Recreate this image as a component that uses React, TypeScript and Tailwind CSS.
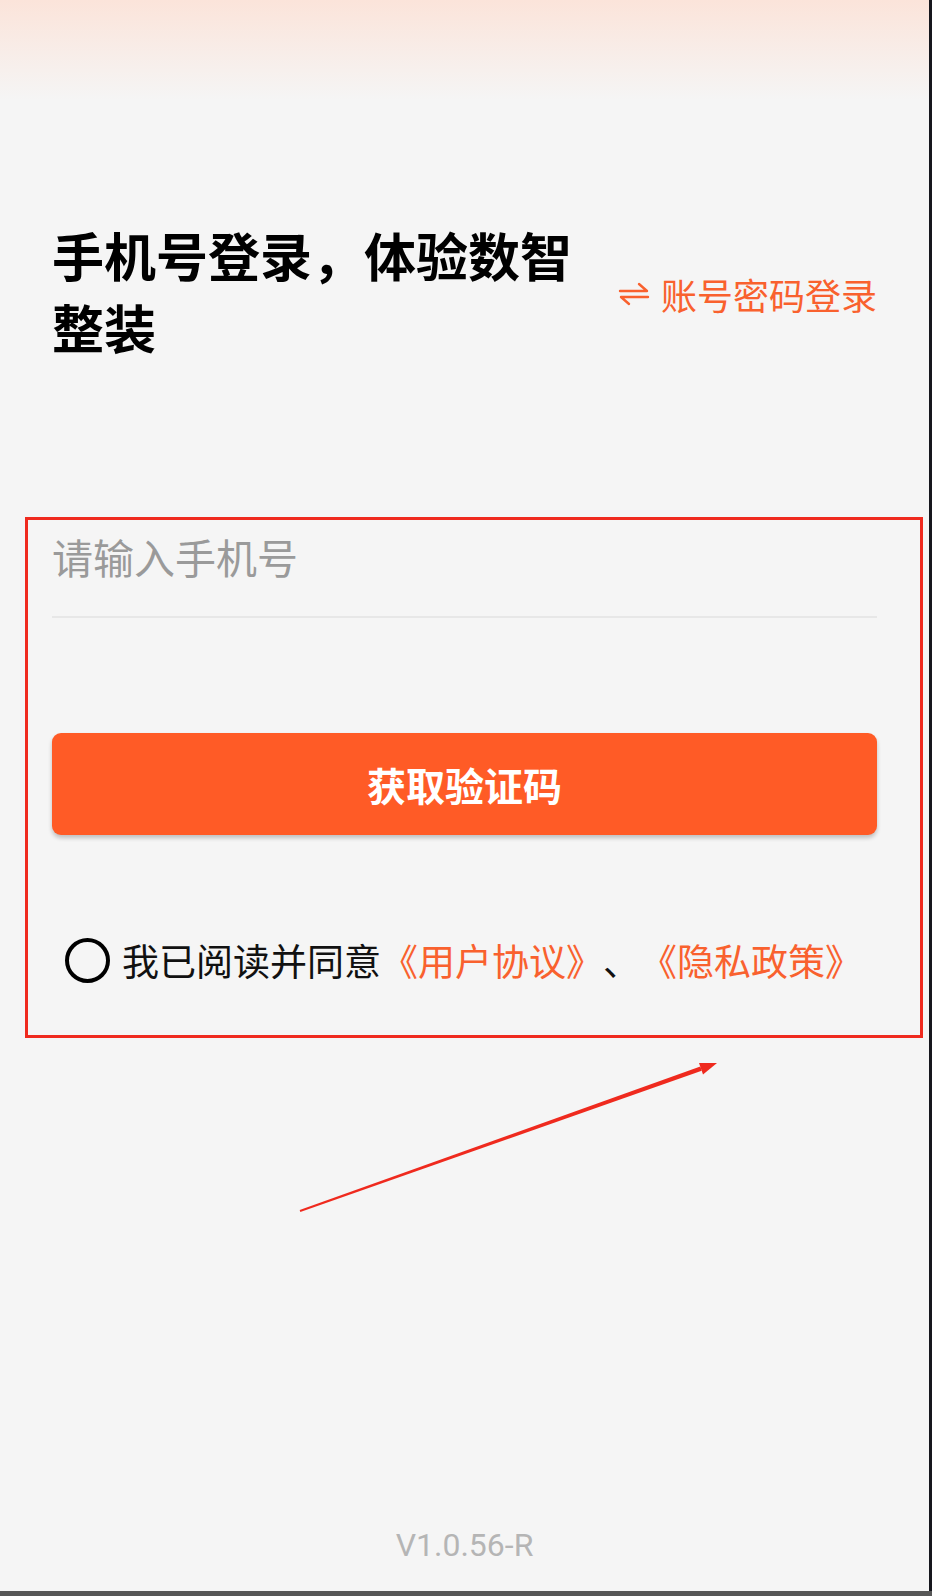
import React from "react";

const cjk = { fontFamily: '"Noto Sans CJK SC", "Noto Sans", sans-serif' };

function SwapIcon() {
  return (
    <svg width="32" height="24" viewBox="0 0 32 24" fill="none" stroke="#f9612e" strokeWidth="2.4" strokeLinecap="round" strokeLinejoin="round">
      <path d="M2 9 H29 L21 2" />
      <path d="M30 15 H3 L11 22" />
    </svg>
  );
}

export default function App() {
  return (
    <div className="w-[932px] h-[1596px] flex flex-col overflow-hidden [text-spacing-trim:space-all]" style={cjk}>
      <div className="flex flex-row flex-1 min-h-0">
        <main className="flex-1 flex flex-col bg-[#f5f5f5]">
          <div className="h-[100px] bg-linear-to-b from-[#fbe4da] to-[#f5f5f5]" />
          <div className="mt-[119px] pl-[52px] pr-[52px] flex flex-row items-center justify-between">
            <h1 className="w-[540px] text-[52px] leading-[72px] font-bold text-black">
              手机号登录，体验数智整装
            </h1>
            <button className="flex items-center gap-[11px] mt-[6px] text-[36px] text-[#f9612e]">
              <SwapIcon />
              <span>账号密码登录</span>
            </button>
          </div>

          <section className="mt-[154px] ml-[25px] mr-[6px] border-[3px] border-[#ef2a1e] pl-[24px] pr-[43px] pt-0 pb-[52px]">
            <div className="h-[98px] pt-[8px] border-b-2 border-[#e7e7e7]">
              <input
                className="w-full h-[58px] bg-transparent outline-none text-[41px] text-[#333] placeholder:text-[#9a9a9a]"
                placeholder="请输入手机号"
                style={cjk}
              />
            </div>
            <button className="mt-[115px] w-full h-[102px] rounded-[9px] bg-[#ff5b26] shadow-[0_3px_4px_rgba(0,0,0,0.22)] flex items-center justify-center text-white text-[39px] font-bold">
              获取验证码
            </button>
            <div className="mt-[103px] h-[45px] pl-[13px] flex flex-row items-center">
              <span className="w-[45px] h-[45px] rounded-full border-[4px] border-black shrink-0" />
              <p className="ml-[12px] text-[37px] text-[#111] whitespace-nowrap [text-spacing-trim:space-all]">
                我已阅读并同意<span className="text-[#f9612e]">《用户协议》</span>、<span className="text-[#f9612e]">《隐私政策》</span>
              </p>
            </div>
          </section>

          <svg width="929" height="200" viewBox="0 0 929 200" className="block">
            <polygon points="300.3,173.9 299.7,172.1 700.3,28.6 701.7,32.8" fill="#ef2a1e" />
            <polygon points="717,25 699,25 703,36.4" fill="#ef2a1e" />
          </svg>

          <div className="flex-1" />
          <div
            className="h-[40px] leading-[40px] text-center text-[32px] text-[#b5b5b5] mb-[26px]"
            style={{ fontFamily: 'Roboto, "Noto Sans", sans-serif' }}
          >
            V1.0.56-R
          </div>
        </main>
        <div className="w-[3px] bg-[#16171d]" />
      </div>
      <div className="h-[5px] bg-[#575757]" />
    </div>
  );
}
